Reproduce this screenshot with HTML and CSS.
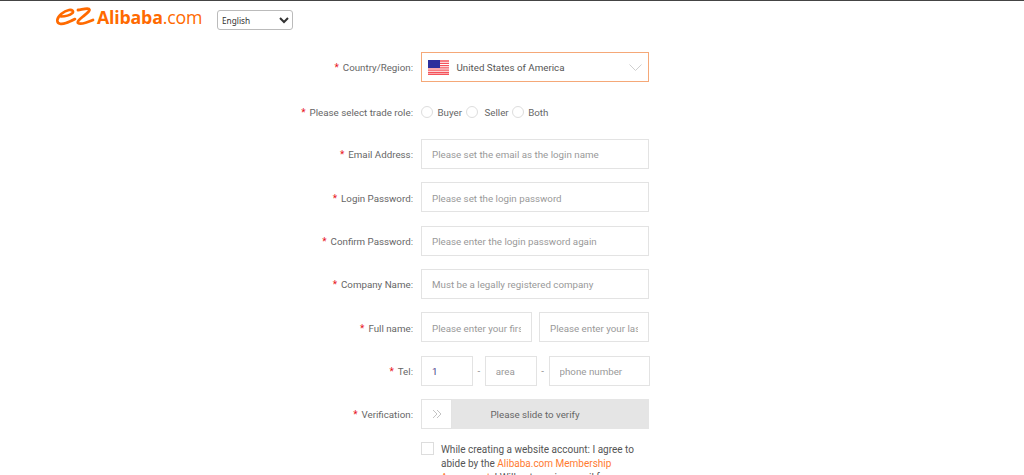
FILE: index.html
```html
<!DOCTYPE html>
<html lang="en">
<head>
<meta charset="utf-8">
<title>Alibaba.com Registration</title>
<link rel="stylesheet" href="styles.css">
</head>
<body>
<header class="top">
  <a class="logo">
    <svg class="logo-mark" viewBox="0 0 40 22" width="40" height="22">
      <path d="M5 10.500 C9 10.500 14 9 16.500 7 C18 5.500 16.500 3.500 13 4 C8 5 1.800 9.500 1.300 14 C1 18.500 6 18.500 10 17 C13 16 16 14.500 19 13" fill="none" stroke="#ff6a00" stroke-width="2.600" stroke-linecap="round"/>
      <path d="M22 4 C26 3.500 31 2 33 3 C35 4.500 30 8 27 10.500 C24 13 21 15.500 22 17 C24 18.500 30 17 37 14" fill="none" stroke="#ff6a00" stroke-width="2.800" stroke-linecap="round"/>
    </svg>
    <span class="logo-text"><b>Alibaba</b>.com</span>
  </a>
  <select class="lang"><option>English</option></select>
</header>
<main class="form">
  <div class="row row-top">
    <label class="lbl"><i>*</i>Country/Region:</label>
    <div class="country">
      <svg class="flag" viewBox="0 0 21 15" width="21" height="15">
        <rect width="21" height="15" fill="#fff"/>
        <path d="M0 1h21M0 3.300h21M0 5.600h21M0 7.900h21M0 10.200h21M0 12.500h21M0 14.500h21" stroke="#f5525a" stroke-width="1.300"/>
        <rect width="12" height="8" fill="#2d2f9c"/>
      </svg>
      <span>United States of America</span>
      <svg class="chev" viewBox="0 0 13 7" width="13" height="7"><path d="M0.500 0.500l6 6 6-6" fill="none" stroke="#cfcfcf" stroke-width="1"/></svg>
    </div>
  </div>
  <div class="row row-top row-role">
    <label class="lbl"><i>*</i>Please select trade role:</label>
    <div class="roles">
      <span class="radio"></span><span class="r1">Buyer</span>
      <span class="radio"></span><span class="r2">Seller</span>
      <span class="radio"></span><span class="r3">Both</span>
    </div>
  </div>
  <div class="row">
    <label class="lbl"><i>*</i>Email Address:</label>
    <input class="inp" placeholder="Please set the email as the login name">
  </div>
  <div class="row">
    <label class="lbl"><i>*</i>Login Password:</label>
    <input class="inp" placeholder="Please set the login password">
  </div>
  <div class="row">
    <label class="lbl"><i>*</i>Confirm Password:</label>
    <input class="inp" placeholder="Please enter the login password again">
  </div>
  <div class="row">
    <label class="lbl"><i>*</i>Company Name:</label>
    <input class="inp" placeholder="Must be a legally registered company">
  </div>
  <div class="row">
    <label class="lbl"><i>*</i>Full name:</label>
    <div class="names">
      <input class="inp" placeholder="Please enter your first name">
      <input class="inp" placeholder="Please enter your last name">
    </div>
  </div>
  <div class="row">
    <label class="lbl"><i>*</i>Tel:</label>
    <div class="tel">
      <input class="inp t-code" value="1">
      <span class="dash">-</span>
      <input class="inp t-area" placeholder="area">
      <span class="dash">-</span>
      <input class="inp t-num" placeholder="phone number">
    </div>
  </div>
  <div class="row">
    <label class="lbl"><i>*</i>Verification:</label>
    <div class="slider">
      <span class="knob"><svg viewBox="0 0 10 10" width="10" height="10"><path d="M1 1l4 4-4 4M5 1l4 4-4 4" fill="none" stroke="#b5b5b5" stroke-width="0.800"/></svg></span>
      <span class="slide-text">Please slide to verify</span>
    </div>
  </div>
  <div class="row row-agree">
    <span class="lbl"></span>
    <div class="agree">
      <span class="check"></span>
      <p>While creating a website account: I agree to abide by the <a>Alibaba.com Membership Agreement</a>; I Will not receive email f</p>
    </div>
  </div>
</main>
</body>
</html>
```
FILE: styles.css
```css
* { box-sizing: border-box; }
html, body { margin: 0; height: 475px; overflow: hidden; background: #fff; }
body { font-family: Roboto, "Open Sans", sans-serif; font-size: 9.750px; color: #666; border-top: 1px solid #444; }
.top { display: flex; align-items: center; height: 38px; padding-left: 56px; }
.logo { display: flex; align-items: center; width: 161px; margin-bottom: 6px; }
.logo-mark { display: block; flex: none; }
.logo-text { font-family: "Open Sans", sans-serif; font-size: 17.800px; color: #ff6a00; letter-spacing: -0.200px; line-height: 24px; margin-left: 1px; }
.logo-text b { font-weight: 700; }
.lang { width: 76px; height: 20px; font-family: "Noto Sans", sans-serif; font-size: 8.300px; color: #333; background: #fff; border: 1px solid #bbb; border-radius: 3px; padding: 0; }
.form { display: flex; flex-direction: column; padding-top: 13px; }
.row { display: grid; grid-template-columns: 413px 228px; column-gap: 8px; align-items: center; height: 30px; margin-bottom: 13.330px; }
.row-role { height: 18px; margin: 8px 0 17.670px; }
.row-agree { align-items: start; height: 60px; margin: 0; }
.lbl { text-align: right; white-space: nowrap; color: #666; padding-top: 2px; }
.row-top .lbl { padding-top: 0; }
.lbl i { color: #e8141c; font-style: normal; margin-right: 4px; font-size: 10px; }
.country { display: flex; align-items: center; height: 30px; padding: 0 6px; border: 1px solid #f5a878; color: #555; }
.flag { margin-right: 7.500px; flex: none; }
.chev { margin-left: auto; }
.roles { display: flex; align-items: center; color: #666; }
.radio { width: 12px; height: 12px; border: 1px solid #ddd; border-radius: 50%; flex: none; }
.r1 { margin: 0 4px 0 4.500px; }
.r2 { margin: 0 3.500px 0 6.500px; }
.r3 { margin-left: 4px; }
.inp { width: 100%; min-width: 0; height: 30px; padding: 2px 10px 0; border: 1px solid #e3e3e3; background: #fff; font-family: Roboto, "Open Sans", sans-serif; font-size: 9.750px; color: #4a3a8a; outline: none; }
.inp::placeholder { color: #999; opacity: 1; }
.names { display: grid; grid-template-columns: 110.500px 110px; column-gap: 7.500px; }
.tel { display: flex; align-items: center; width: 229px; }
.t-code { width: 52px; }
.t-area { width: 52px; }
.t-num { width: 101.500px; }
.dash { width: 11.750px; text-align: center; color: #888; flex: none; }
.slider { position: relative; display: flex; align-items: center; justify-content: center; height: 30px; background: #e5e5e5; }
.knob { position: absolute; left: 0; top: 0; display: flex; align-items: center; justify-content: center; width: 31px; height: 30px; background: #fff; border: 1px solid #e3e3e3; }
.slide-text { color: #666; padding-top: 2px; }
.agree { display: flex; align-items: flex-start; }
.check { flex: none; width: 13px; height: 13px; margin-right: 7px; border: 1px solid #ddd; }
.agree p { margin: 1px 0 0; line-height: 14px; color: #555; width: 208px; font-size: 10px; }
.agree a { color: #ff7a30; }
```
